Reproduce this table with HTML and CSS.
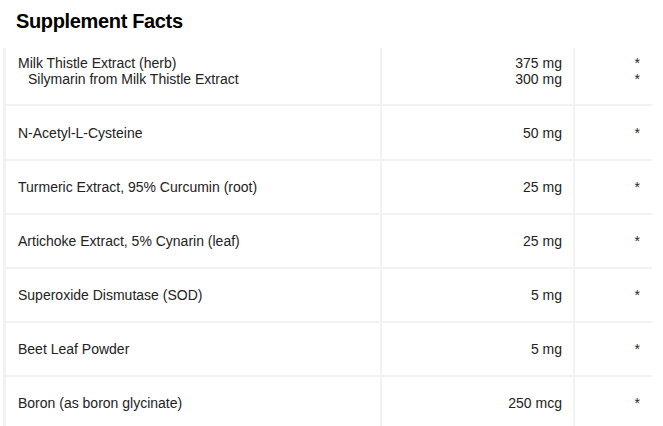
FILE: index.html
```html
<!DOCTYPE html>
<html>
<head>
<meta charset="utf-8">
<link rel="stylesheet" href="styles.css">
</head>
<body>
<div class="page">
  <h1 class="title">Supplement Facts</h1>
  <div class="facts">
    <div class="row row-first">
      <div class="cell name">Milk Thistle Extract (herb)<br><span class="sub">Silymarin from Milk Thistle Extract</span></div>
      <div class="cell amt">375 mg<br>300 mg</div>
      <div class="cell dv">*<br>*</div>
    </div>
    <div class="row row-second">
      <div class="cell name">N-Acetyl-L-Cysteine</div>
      <div class="cell amt">50 mg</div>
      <div class="cell dv">*</div>
    </div>
    <div class="row">
      <div class="cell name">Turmeric Extract, 95% Curcumin (root)</div>
      <div class="cell amt">25 mg</div>
      <div class="cell dv">*</div>
    </div>
    <div class="row">
      <div class="cell name">Artichoke Extract, 5% Cynarin (leaf)</div>
      <div class="cell amt">25 mg</div>
      <div class="cell dv">*</div>
    </div>
    <div class="row">
      <div class="cell name">Superoxide Dismutase (SOD)</div>
      <div class="cell amt">5 mg</div>
      <div class="cell dv">*</div>
    </div>
    <div class="row">
      <div class="cell name">Beet Leaf Powder</div>
      <div class="cell amt">5 mg</div>
      <div class="cell dv">*</div>
    </div>
    <div class="row">
      <div class="cell name">Boron (as boron glycinate)</div>
      <div class="cell amt">250 mcg</div>
      <div class="cell dv">*</div>
    </div>
  </div>
</div>
</body>
</html>
```
FILE: styles.css
```css
html, body {
  margin: 0;
  padding: 0;
  background: #ffffff;
}
body {
  font-family: "Liberation Sans", Arial, sans-serif;
  color: #222222;
  overflow: hidden;
}
.page {
  padding: 9px 0 0 3px;
}
.title {
  margin: 0 0 15px 13px;
  font-size: 20px;
  line-height: 24px;
  letter-spacing: -0.35px;
  font-weight: bold;
  color: #000000;
}
.facts {
  width: 646px;
  border-left: 3px solid #f2f2f2;
}
.row {
  display: grid;
  grid-template-columns: 376px 193px 77px;
  height: 52px;
  border-bottom: 2px solid #f2f2f2;
  font-size: 14px;
  line-height: 16px;
}
.row-first {
  height: 56px;
}
.row-second {
  height: 53px;
}
.cell {
  display: flex;
  flex-direction: column;
  justify-content: center;
  box-sizing: border-box;
}
.row-first .cell {
  justify-content: flex-start;
  padding-top: 7px;
}
.name {
  padding-left: 12px;
  border-right: 2px solid #f2f2f2;
}
.amt {
  align-items: flex-end;
  padding-right: 11px;
  border-right: 2px solid #f2f2f2;
  text-align: right;
}
.dv {
  align-items: flex-end;
  padding-right: 12px;
  text-align: right;
}
.sub {
  padding-left: 10px;
}
```
